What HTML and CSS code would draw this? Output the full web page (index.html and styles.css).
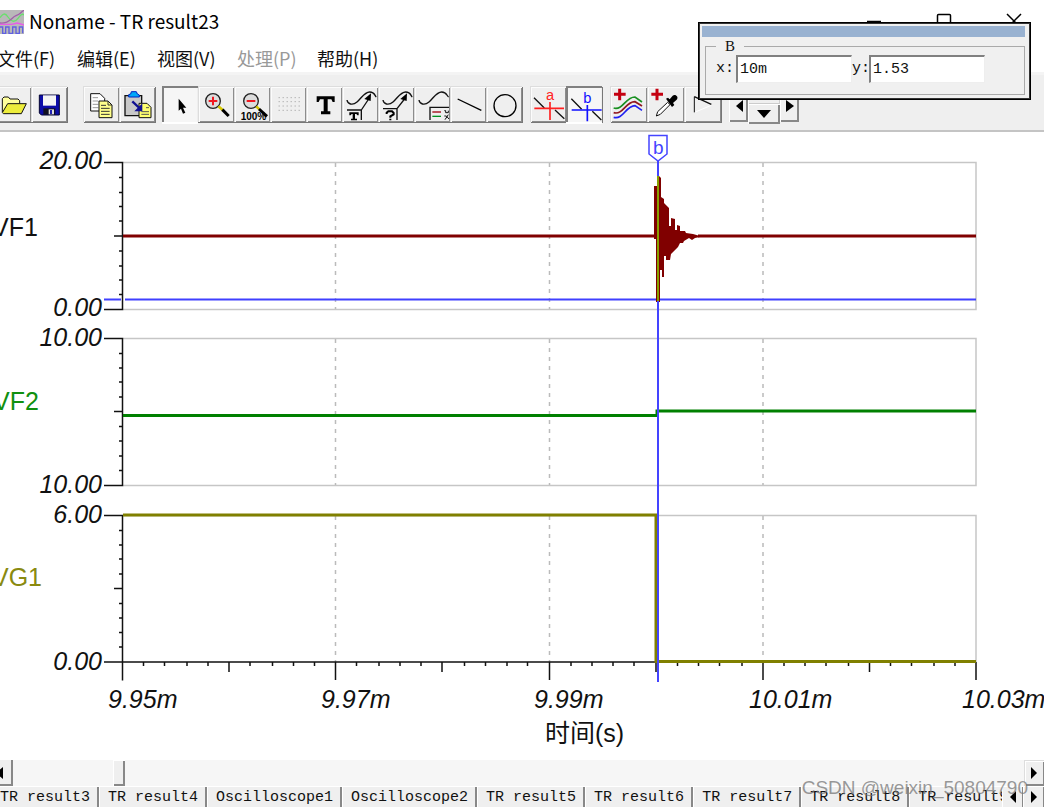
FILE: index.html
```html
<!DOCTYPE html>
<html lang="zh-CN">
<head>
<meta charset="utf-8">
<title>Noname - TR result23</title>
<link rel="stylesheet" href="styles.css">
</head>
<body>
<div class="window">
  <header class="titlebar">
    <svg class="app-icon" viewBox="0 27 72 72" aria-hidden="true">
      <rect y="27" width="72" height="72" fill="#b9b9b9"/>
      <path d="M0 50C8 38 15 34 24 48S44 66 54 52 68 38 72 42" fill="none" stroke="#69e06d" stroke-width="4"/>
      <path d="M0 66C26 70 36 48 48 44S64 32 72 28" fill="none" stroke="#a060a8" stroke-width="4"/>
      <path d="M0 70H36L52 66 72 72" fill="none" stroke="#e85be8" stroke-width="4"/>
      <path d="M0 78H8V97H17V78H27V97H38V78H48V97H58V78H68V97" fill="none" stroke="#6060e0" stroke-width="4"/>
    </svg>
    <h1 class="title">Noname - TR result23</h1>
    <div class="window-controls">
      <button class="control" aria-label="最小化"><svg viewBox="0 0 16 16"><path d="M1 9.500H15"/></svg></button>
      <button class="control" aria-label="最大化"><svg viewBox="0 0 16 16"><rect x="1.500" y="2.500" width="13" height="12" rx="1"/></svg></button>
      <button class="control" aria-label="关闭"><svg viewBox="0 0 16 16"><path d="M1 2L15 16M15 2L1 16"/></svg></button>
    </div>
  </header>

  <nav class="menubar">
    <button class="menu">文件(F)</button>
    <button class="menu">编辑(E)</button>
    <button class="menu">视图(V)</button>
    <button class="menu" disabled>处理(P)</button>
    <button class="menu">帮助(H)</button>
  </nav>

  <div class="toolbar">
    <div class="group file-group">
      <button class="tool" aria-label="打开"><svg viewBox="-15 258 108 111">
        <path d="M7 336V296L12 291H25L30 297H54L59 302V310" fill="#ffff9c" stroke="#111" stroke-width="3"/>
        <path d="M7 338L23 311H79L64 341H10Z" fill="#eded3c" stroke="#111" stroke-width="3"/>
      </svg></button>
      <button class="tool" aria-label="保存"><svg viewBox="93 258 108 111">
        <path d="M118 285H178V345H124L118 339Z" fill="#0c0ca8" stroke="#050530" stroke-width="3"/>
        <path d="M129 286H168V317H129Z" fill="#f4f4f4"/>
        <path d="M130 325H166V344H130Z" fill="#101020"/><path d="M146 328H162V343H146Z" fill="#ddd"/><path d="M150 330H156V342H150Z" fill="#2020b0"/>
      </svg></button>
    </div>
    <div class="group copy-group">
      <button class="tool" aria-label="复制"><svg viewBox="249 258 108 111">
        <path d="M272 281H300L314 295V333H272Z" fill="#fff" stroke="#111" stroke-width="3"/>
        <path d="M278 293H294M278 303H295M278 313H295M278 323H295" stroke="#999" stroke-width="3"/>
        <path d="M297 303H324L336 315V353H297Z" fill="#ffff8c" stroke="#111" stroke-width="3"/>
        <path d="M324 303V315H336M303 316H318M303 325H329M303 334H329M303 343H329" fill="none" stroke="#333" stroke-width="3"/>
      </svg></button>
      <button class="tool" aria-label="粘贴"><svg viewBox="357 258 108 111">
        <path d="M375 287H425V347H375Z" fill="#c8c8c8" stroke="#111" stroke-width="4"/>
        <path d="M386 291V284L392 282 394 275H409L412 282 418 285V291Z" fill="#00a8f8" stroke="#0020c0" stroke-width="3"/>
        <path d="M417 310H441L453 322V353H417Z" fill="#ffff70" stroke="#111" stroke-width="3"/>
        <path d="M424 335H447M424 343H447M438 323H447" stroke="#555" stroke-width="3"/>
        <path d="M397 304L418 324" stroke="#101090" stroke-width="7"/><path d="M427 310V334H403Z" fill="#101090"/>
      </svg></button>
    </div>
    <div class="group draw-group">
      <button class="tool pressed" aria-label="选择" aria-pressed="true"><svg viewBox="486 258 108 111">
        <path d="M536 296V332L543 326 549 341 556 338 549 323H559Z" fill="#000"/>
      </svg></button>
      <button class="tool" aria-label="放大"><svg viewBox="594 258 108 111">
        <circle cx="639" cy="303" r="22" fill="#ddd" stroke="#222" stroke-width="4"/>
        <path d="M639 290V316M626 303H652" stroke="#f01820" stroke-width="6"/>
        <path d="M655 319L668 330" stroke="#d6c800" stroke-width="8"/><path d="M667 329L686 348" stroke="#000" stroke-width="9"/>
      </svg></button>
      <button class="tool" aria-label="缩小到 100%"><svg viewBox="702 258 108 111">
        <circle cx="753" cy="303" r="22" fill="#ddd" stroke="#222" stroke-width="4"/>
        <path d="M740 303H766" stroke="#f01820" stroke-width="6"/>
        <path d="M769 319L778 328" stroke="#d6c800" stroke-width="8"/><path d="M777 327L801 349" stroke="#000" stroke-width="9"/>
        <text class="zoom-label" x="722" y="360">100%</text>
      </svg></button>
      <button class="tool" aria-label="网格"><svg viewBox="810 258 108 111">
        <path d="M836 293H900M836 305H900M836 318H900M836 331H900" stroke="#999" stroke-width="3" stroke-dasharray="3 9"/>
      </svg></button>
      <button class="tool" aria-label="文本"><svg viewBox="918 258 108 111">
        <path d="M950 289H1004V306H998L994 298H983V334H991V343H963V334H971V298H960L956 306H950Z" fill="#000"/>
      </svg></button>
      <button class="tool" aria-label="曲线标签"><svg viewBox="21 258 108 111">
        <path d="M36 300C38 312 52 318 66 306S88 276 104 276 119 288 124 291" fill="none" stroke="#111" stroke-width="4"/>
        <path d="M79 330L103 294M36 330H79V360" fill="none" stroke="#111" stroke-width="4"/><path d="M108 280L107 303 88 297Z"/>
        <path d="M43 337H71V346H67L64 342H60V356H66V361H48V356H53V342H50L47 346H43Z"/>
      </svg></button>
      <button class="tool" aria-label="曲线查询"><svg viewBox="129 258 108 111">
        <path d="M144 300C146 312 160 318 174 306S196 276 212 276 227 288 232 291" fill="none" stroke="#111" stroke-width="4"/>
        <path d="M186 326L211 294M144 326H186V360" fill="none" stroke="#111" stroke-width="4"/><path d="M216 280L215 303 196 297Z"/>
        <path d="M155 342V338L160 334H171L176 339V343L166 349V353M166 356V361" fill="none" stroke="#000" stroke-width="6"/>
      </svg></button>
      <button class="tool" aria-label="图例"><svg viewBox="237 258 108 111">
        <path d="M252 300C254 312 268 318 282 306S304 276 320 276 335 288 341 291" fill="none" stroke="#111" stroke-width="4"/>
        <path d="M342 322H285V360" fill="none" stroke="#111" stroke-width="4"/>
        <path d="M292 336H318" stroke="#a00010" stroke-width="4"/><path d="M292 349H318" stroke="#009020" stroke-width="4"/>
        <path d="M328 332H332V338H340V332M328 348H334L342 357M340 344L330 359" fill="none" stroke="#111" stroke-width="3"/>
      </svg></button>
      <button class="tool" aria-label="直线"><svg viewBox="345 258 108 111"><path d="M368 297L439 331" stroke="#000" stroke-width="4"/></svg></button>
      <button class="tool" aria-label="圆"><svg viewBox="453 258 108 111"><circle cx="510" cy="317" r="33" fill="none" stroke="#000" stroke-width="4"/></svg></button>
    </div>
    <div class="group cursor-group">
      <button class="tool" aria-label="光标 a"><svg viewBox="585 258 108 111">
        <path d="M597 293L628 324M660 330L688 356" stroke="#111" stroke-width="4"/><path d="M598 325H687M645 306V360" stroke="#ff2020" stroke-width="5"/>
        <text class="cursor-label a" x="633" y="301">a</text>
      </svg></button>
      <button class="tool pressed" aria-label="光标 b" aria-pressed="true"><svg viewBox="693 258 108 111">
        <path d="M709 296L740 328M772 334L799 360" stroke="#111" stroke-width="4"/><path d="M710 330H800M757 315V364" stroke="#1010ff" stroke-width="5"/>
        <text class="cursor-label b" x="745" y="308">b</text>
      </svg></button>
    </div>
    <div class="group curve-group">
      <button class="tool wide" aria-label="添加曲线"><svg viewBox="825 258 111 111">
        <path d="M854 266V301M837 283H872" stroke="#c40010" stroke-width="9"/>
        <g fill="none" stroke-width="5"><path d="M836 324C864 332 872 290 900 291L921 306" stroke="#189020"/><path d="M836 338C864 346 872 304 900 305L921 318" stroke="#901820"/><path d="M836 352C864 360 872 318 900 317L921 331" stroke="#2020f0"/></g>
      </svg></button>
      <button class="tool wide" aria-label="拾取曲线"><svg viewBox="936 258 111 111">
        <path d="M966 266V301M949 283H984" stroke="#c40010" stroke-width="9"/>
        <path d="M964 348L968 335 998 307 1005 314 976 343Z" fill="#fff" stroke="#111" stroke-width="3"/>
        <path d="M993 296L999 293 1004 298 1013 287C1020 280 1033 290 1025 299L1014 309 1018 315 1011 321Z"/>
      </svg></button>
      <button class="tool wide" aria-label="处理曲线"><svg viewBox="0 258 111 111">
        <path d="M31 337V290" stroke="#111" stroke-width="3"/><path d="M31 290L82 313" stroke="#111" stroke-width="4"/><path d="M34 336L82 316" stroke="#fff" stroke-width="3"/>
      </svg></button>
    </div>
    <div class="pan-group">
      <button class="pan side" aria-label="向左"><svg viewBox="0 0 10 14"><path d="M9 1V13L2 7Z"/></svg></button>
      <div class="pan-column">
        <button class="pan up" aria-label="向上"><svg viewBox="0 0 14 8"><path d="M0 8H14L7 0Z"/></svg></button>
        <button class="pan" aria-label="向下"><svg viewBox="0 0 14 8"><path d="M0 0H14L7 8Z"/></svg></button>
      </div>
      <button class="pan side" aria-label="向右"><svg viewBox="0 0 10 14"><path d="M1 1V13L9 7Z"/></svg></button>
    </div>
  </div>

  <main class="plot">
    <svg class="chart" viewBox="0 132 1044 628" role="img" aria-label="VF1, VF2, VG1 瞬态波形">
      <g class="frame">
        <path d="M123 162.500H976V309.500H123M123 338.500H976V485.500H123M123 515.500H976V662"/>
        <path class="dash" d="M335.500 163V309M335.500 339V485M335.500 516V662M549.500 163V309M549.500 339V485M549.500 516V662M763 163V309M763 339V485M763 516V662"/>
      </g>
      <g class="axis">
        <path d="M104 162.500H122.500V309.500H104M104 338.500H122.500V485.500H104M104 515.500H122.500V680.500M104 662H976"/>
        <path d="M114 236H122M114 411.500H122M114 588.500H122"/>
        <path d="M119 177.500H122M119 192.500H122M119 206.500H122M119 221H122M119 251H122M119 266H122M119 280H122M119 294.500H122"/>
        <path d="M119 353.500H122M119 368H122M119 382H122M119 397H122M119 426.500H122M119 441H122M119 456H122M119 470.500H122"/>
        <path d="M119 530.500H122M119 545H122M119 559H122M119 574H122M119 603.500H122M119 618H122M119 632.500H122M119 647H122"/>
        <path d="M335.500 662V680M549.500 662V680M763 662V680M976 662V680M229 662V672M442 662V672M656 662V672M869.500 662V672"/>
        <path d="M143.500 662V666M164.500 662V666M187 662V666M208 662V666M250 662V666M272.500 662V666M293.500 662V666M314.500 662V666M356.500 662V666M379 662V666M400 662V666M421 662V666M464.500 662V666M485.500 662V666M507 662V666M527.500 662V666M571 662V666M592 662V666M613 662V666M634 662V666M677.500 662V666M698.500 662V666M719.500 662V666M742 662V666M784 662V666M805 662V666M826 662V666M848.500 662V666M890.500 662V666M911.500 662V666M934 662V666M955 662V666"/>
      </g>
      <g class="scale">
        <text x="102" y="169" text-anchor="end">20.00</text><text x="102" y="316" text-anchor="end">0.00</text>
        <text x="102" y="346" text-anchor="end">10.00</text><text x="102" y="493" text-anchor="end">10.00</text>
        <text x="102" y="523" text-anchor="end">6.00</text><text x="102" y="670" text-anchor="end">0.00</text>
        <text x="108" y="708">9.95m</text><text x="321" y="708">9.97m</text><text x="534" y="708">9.99m</text>
        <text x="749" y="708">10.01m</text><text x="962" y="708">10.03m</text>
      </g>
      <g class="names">
        <text x="-8" y="236">VF1</text><text class="vf2" x="-7" y="410">VF2</text><text class="vg1" x="-8" y="586">VG1</text>
        <text x="545" y="742">时间(s)</text>
      </g>
      <path class="level" d="M104 299.500H121M125 299.500H976"/>
      <path class="trace red" d="M123 236H656M698 236H976"/>
      <path class="burst" d="M654 186H657V180L659 176 661 178V197L664 199V203L669 208V226H671V218L675 219V230H677V225L680 226V231L685 231 686 233 693 234 700 236V237L695 238 692 240 689 238 684 241 683 243H680L678 247 671 254 670 260H666V256H664V277H662V270H660V302H656V239H654Z"/>
      <path class="trace green" d="M123 415.500H657V411H976"/>
      <path class="trace olive" d="M123 515H656V661.500H976"/>
      <path class="cursor" d="M658 161V682"/>
      <path class="crossing" d="M658 176V301"/>
      <path class="flag" d="M649 135.500H667V154L658 161 649 154Z"/>
      <text class="flag-text" x="653" y="154">b</text>
    </svg>
  </main>

  <div class="scrollbar">
    <button class="scroll-end first" aria-label="向左滚动"><svg viewBox="0 0 8 12"><path d="M7 0V12L0 6Z"/></svg></button>
    <div class="track"><div class="thumb"></div></div>
    <button class="scroll-end" aria-label="向右滚动"><svg viewBox="0 0 8 12"><path d="M1 0V12L7 6Z"/></svg></button>
  </div>

  <footer class="tabs">
    <div class="tab-list">
      <button class="tab">TR result3</button><button class="tab">TR result4</button><button class="tab">Oscilloscope1</button><button class="tab">Oscilloscope2</button><button class="tab">TR result5</button><button class="tab">TR result6</button><button class="tab">TR result7</button><button class="tab">TR result8</button><button class="tab">TR result9</button>
    </div>
    <button class="tab-nav" aria-label="上一个"><svg viewBox="0 0 8 12"><path d="M7 0V12L1 6Z"/></svg></button>
    <button class="tab-nav" aria-label="下一个"><svg viewBox="0 0 8 12"><path d="M1 0V12L7 6Z"/></svg></button>
  </footer>

  <form class="cursor-panel">
    <div class="panel-title"></div>
    <fieldset class="panel-box">
      <legend>B</legend>
      <label for="cursor-x">x:</label><input id="cursor-x" value="10m">
      <label for="cursor-y">y:</label><input id="cursor-y" value="1.53">
    </fieldset>
  </form>
  <div class="watermark">CSDN @weixin_50804790</div>
</div>
</body>
</html>
```
FILE: styles.css
```css
* { box-sizing: border-box; }
body { margin: 0; background: #fff; color: #111; }
button { margin: 0; padding: 0; border: 0; background: none; color: inherit; font: inherit; }
svg { display: block; }

.window {
  position: relative;
  display: flex;
  flex-direction: column;
  min-height: 100vh;
  overflow: hidden;
  font-family: "Liberation Sans", "Noto Sans CJK SC", sans-serif;
}

.titlebar { display: flex; align-items: center; height: 44px; }
.app-icon { width: 24px; height: 24px; }
.title { margin: 0 0 2px 5px; font: 400 19px/24px "Noto Sans CJK SC", sans-serif; color: #000; }
.window-controls { display: flex; gap: 54px; margin-left: auto; padding-right: 22px; }
.control { width: 16px; height: 16px; margin-bottom: 4px; }
.control svg { fill: none; stroke: #000; stroke-width: 1.500; overflow: visible; }

.menubar { display: flex; gap: 20px; height: 28px; margin-left: -3px; align-items: center; }
.menu { min-width: 60px; font: 18px/28px "Noto Sans CJK SC", sans-serif; white-space: nowrap; text-align: left; }
.menu:disabled { color: #999; }

.toolbar {
  display: flex;
  align-items: flex-start;
  height: 60px;
  padding-top: 11px;
  background: #efefef;
  border-top: 3px solid #f4f4f4;
  border-bottom: 2px solid #c4c4c4;
  overflow: hidden;
}
.group { display: flex; flex: none; box-shadow: 1px 1px #777; }
.file-group { margin-left: -5px; }
.copy-group { margin-left: 16px; }
.draw-group { margin-left: 7px; }
.cursor-group { margin-left: 8px; }
.curve-group { margin-left: 8px; }
.tool {
  width: 36px;
  height: 36px;
  background: #efefef;
  box-shadow: inset 1px 1px #ddd, inset 2px 2px #fcfcfc, inset -1px -1px #8c8c8c;
}
.tool.wide { width: 37px; }
.tool svg { width: 100%; height: 37px; }
.tool.pressed { background: #f6f6f6; box-shadow: inset 2px 2px #808080, inset -1px 0 #eee, 0 2px #fff; }
.zoom-label { font: 700 30px "Liberation Sans", sans-serif; }
.cursor-label { font: 44px "Liberation Sans", sans-serif; }
.cursor-label.a { fill: #f22; }
.cursor-label.b { fill: #11f; }
.pan-group { display: flex; margin-left: 8px; }
.pan { display: grid; place-items: center; width: 32px; height: 20px; background: #efefef; box-shadow: inset 1px 1px #fff, inset -2px -2px #888; }
.pan.up { height: 18px; padding-bottom: 6px; box-shadow: inset 1px 1px #fff, inset -1px -1px #ccc; }
.pan svg { width: 14px; height: 8px; }
.pan.side { width: 19px; height: 36px; padding-top: 4px; }
.pan.side svg { width: 10px; height: 14px; }

.plot { flex: 1; }
.chart { width: 100%; height: auto; }
.frame { fill: none; stroke: #c6c6c6; stroke-width: 1.500; }
.dash { stroke: #bbb; stroke-dasharray: 4 5; }
.axis { fill: none; stroke: #111; stroke-width: 1.500; }
.scale { font: italic 25px "Liberation Sans", sans-serif; fill: #111; }
.names { font: 25px "Liberation Sans", "Noto Sans CJK SC", sans-serif; fill: #111; }
.vf2 { fill: #109010; }
.vg1 { fill: #8a8a10; }
.level { stroke: #4040ff; stroke-width: 2; }
.trace { fill: none; stroke-width: 3; }
.red { stroke: #800000; }
.green { stroke: #008000; }
.olive { stroke: #808000; }
.burst { fill: #800000; }
.cursor { stroke: #4444ff; stroke-width: 2; }
.crossing { stroke: #88a000; stroke-width: 2; }
.flag { fill: #fff; stroke: #4444ff; stroke-width: 1.500; }
.flag-text { font: 19px "Liberation Sans", sans-serif; fill: #4444ff; }

.scrollbar { display: flex; height: 26px; background: #f6f6f6; }
.scroll-end { display: grid; place-items: center; width: 20px; background: #efefef; box-shadow: inset 1px 1px #ddd, inset 2px 2px #fff, inset -1px -2px #888; }
.scroll-end.first { width: 23px; margin-left: -10px; padding-right: 3px; box-shadow: inset -2px -2px #888; }
.scroll-end svg, .tab-nav svg { width: 8px; height: 12px; }
.track { flex: 1; padding-left: 100px; }
.thumb { width: 12px; height: 26px; background: #efefef; box-shadow: inset 1px 1px #fff, inset -2px -2px #888; }

.tabs { display: flex; height: 21px; background: #efefef; }
.tab-list { display: flex; flex: 1; min-width: 0; margin-left: -9px; overflow: hidden; }
.tab { flex: none; padding: 2px 9px 0; font: 15px/19px "Liberation Mono", monospace; box-shadow: inset 1px 1px #fff, inset -2px 0 #888; }
.tab-nav { display: grid; place-items: center; width: 21px; box-shadow: inset 1px 1px #fff, inset -1px 0 #888; }

.cursor-panel {
  position: absolute;
  top: 22px;
  right: 13px;
  width: 333px;
  padding: 3px 5px 4px 3px;
  border: 1px solid #000;
  outline: 1px solid #333;
  outline-offset: -2px;
  background: #f0f0f0;
  font: 15px/18px "Liberation Mono", monospace;
}
.panel-title { height: 11px; background: #99b2d1; }
.panel-box { display: flex; align-items: flex-start; height: 56px; margin: 2px 0 0 3px; padding: 2px 0 0 10px; border: 1px solid #aaa; }
.panel-box legend { padding: 0 9px; font: 15px/14px "Liberation Serif", serif; }
.panel-box label { width: 20px; line-height: 28px; }
.panel-box label:nth-of-type(2) { width: 17px; }
.panel-box input {
  width: 116px;
  height: 28px;
  padding: 0 2px;
  border: 1px solid #eee;
  border-top: 2px solid #808080;
  border-left: 2px solid #808080;
  background: #fff;
  font: inherit;
  color: #111;
}
.watermark {
  position: absolute;
  right: 16px;
  bottom: 8px;
  font: 19px/22px "Liberation Sans", sans-serif;
  color: rgba(120, 120, 120, 0.75);
  pointer-events: none;
}
```
